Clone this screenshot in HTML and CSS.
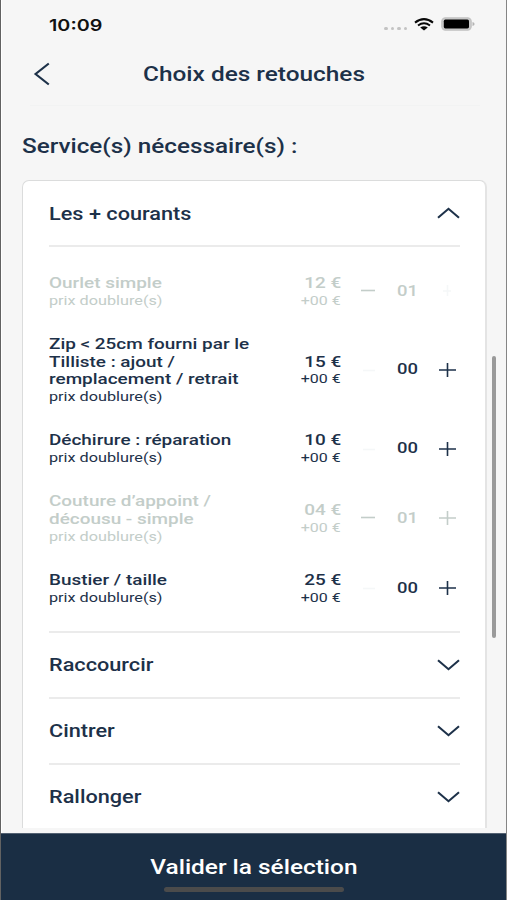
FILE: index.html
```html
<!DOCTYPE html>
<html lang="fr">
<head>
<meta charset="utf-8">
<title>Choix des retouches</title>
<link rel="stylesheet" href="styles.css">
</head>
<body>
<div class="screen">
  <div class="status">
    <span class="wide time">10:09</span>
    <div class="status-icons">
      <span class="dots"><i></i><i></i><i></i><i></i></span>
      <svg class="wifi" width="20" height="13" viewBox="0 0 20 13"><path d="M1 4.6Q10-2.4 19 4.6M4 7.5Q10 3.1 16 7.5" fill="none" stroke="#080808" stroke-width="2"/><path d="M6.2 9.6Q10 6.7 13.8 9.6L10 12.6Z" fill="#080808"/></svg>
      <svg class="battery" width="34" height="14" viewBox="0 0 34 14"><rect x=".8" y=".8" width="29.4" height="12.4" rx="3.6" fill="#c9c9c9" stroke="#c3c3c3" stroke-width="1.2"/><rect x="2.8" y="2.6" width="25.2" height="8.8" rx="1.6" fill="#000"/><path d="M31.5 5Q33.6 5.4 33.6 7T31.5 9Z" fill="#b4b4b4"/></svg>
    </div>
  </div>
  <header class="header">
    <svg class="back" width="18" height="24" viewBox="0 0 18 24"><path d="M15.8 1.5L2.6 12L15.8 22.5" fill="none" stroke="#1d3149" stroke-width="2.2"/></svg>
    <h1 class="wide title">Choix des retouches</h1>
  </header>
  <main class="content">
    <h2 class="wide heading">Service(s) nécessaire(s) :</h2>
    <section class="card">
      <div class="section-head first"><span class="wide">Les + courants</span><svg width="23" height="12" viewBox="0 0 23 12"><path d="M1 10.7L11.5 1.8L22 10.7" /></svg></div>
      <div class="items">
        <div class="item off">
          <div class="name"><b class="wide">Ourlet simple</b><small class="wide">prix doublure(s)</small></div>
          <div class="price"><b class="wide">12 €</b><small class="wide">+00 €</small></div>
          <svg class="minus" width="14" height="16" viewBox="0 0 14 16"><path d="M0 7.5H14"/></svg><span class="wide qty">01</span><svg class="plus faint" width="17" height="16" viewBox="0 0 17 16"><path d="M4 8H12M8.5 2V13"/></svg>
        </div>
        <div class="item">
          <div class="name"><b class="wide">Zip &lt; 25cm fourni par le<br>Tilliste : ajout /<br>remplacement / retrait</b><small class="wide">prix doublure(s)</small></div>
          <div class="price"><b class="wide">15 €</b><small class="wide">+00 €</small></div>
          <svg class="minus faint" width="14" height="16" viewBox="0 0 14 16"><path d="M2 8.5H14"/></svg><span class="wide qty">00</span><svg class="plus" width="17" height="16" viewBox="0 0 17 16"><path d="M0 8H17M8.5 1V15"/></svg>
        </div>
        <div class="item">
          <div class="name"><b class="wide">Déchirure : réparation</b><small class="wide">prix doublure(s)</small></div>
          <div class="price"><b class="wide">10 €</b><small class="wide">+00 €</small></div>
          <svg class="minus faint" width="14" height="16" viewBox="0 0 14 16"><path d="M2 8.5H14"/></svg><span class="wide qty">00</span><svg class="plus" width="17" height="16" viewBox="0 0 17 16"><path d="M0 8H17M8.5 1V15"/></svg>
        </div>
        <div class="item off">
          <div class="name"><b class="wide">Couture d’appoint /<br>décousu - simple</b><small class="wide">prix doublure(s)</small></div>
          <div class="price"><b class="wide">04 €</b><small class="wide">+00 €</small></div>
          <svg class="minus" width="14" height="16" viewBox="0 0 14 16"><path d="M0 7.5H14"/></svg><span class="wide qty">01</span><svg class="plus" width="17" height="16" viewBox="0 0 17 16"><path d="M0 8H17M8.5 1V15"/></svg>
        </div>
        <div class="item">
          <div class="name"><b class="wide">Bustier / taille</b><small class="wide">prix doublure(s)</small></div>
          <div class="price"><b class="wide">25 €</b><small class="wide">+00 €</small></div>
          <svg class="minus faint" width="14" height="16" viewBox="0 0 14 16"><path d="M2 8.5H14"/></svg><span class="wide qty">00</span><svg class="plus" width="17" height="16" viewBox="0 0 17 16"><path d="M0 8H17M8.5 1V15"/></svg>
        </div>
      </div>
      <div class="section-head"><span class="wide">Raccourcir</span><svg width="23" height="12" viewBox="0 0 23 12"><path d="M1 1.3L11.5 10.2L22 1.3"/></svg></div>
      <div class="section-head"><span class="wide">Cintrer</span><svg width="23" height="12" viewBox="0 0 23 12"><path d="M1 1.3L11.5 10.2L22 1.3"/></svg></div>
      <div class="section-head"><span class="wide">Rallonger</span><svg width="23" height="12" viewBox="0 0 23 12"><path d="M1 1.3L11.5 10.2L22 1.3"/></svg></div>
    </section>
  </main>
  <footer class="footer">
    <span class="wide">Valider la sélection</span>
    <div class="home"></div>
  </footer>
  <div class="scrollbar"></div>
</div>
</body>
</html>
```

FILE: styles.css
```css
* { box-sizing: border-box; margin: 0; }

body {
  font-family: Roboto, "Liberation Sans", sans-serif;
  color: #1d3149;
  background: #f6f6f6;
}

.screen {
  position: relative;
  width: 507px;
  height: 900px;
  display: flex;
  flex-direction: column;
  overflow: hidden;
  background: #f6f6f6;
  border-left: 1px solid #626262;
  border-right: 1px solid #858585;
  box-shadow: inset 1px 0 #fff;
}

/* Expanded letterforms used by every label */
.wide {
  display: block;
  width: max-content;
  transform: scaleX(1.22);
  transform-origin: left center;
  font-weight: 500;
  white-space: nowrap;
}

.status {
  height: 49px;
  padding: 0 31px 0 48px;
  display: flex;
  justify-content: space-between;
  align-items: center;
}
.time { font: 600 16.2px/20px Inter, sans-serif; color: #111; }
.status-icons { display: flex; align-items: center; margin-top: -1px; }
.dots { display: flex; gap: 3px; margin: 9px 7px 0 0; }
.dots i { width: 3.5px; height: 3px; border-radius: 2px; background: #c3c3c3; }
.battery { margin-left: 7px; }

.header {
  height: 57px;
  margin: 0 26px 0 29px;
  padding: 0 0 6px 3px;
  display: flex;
  align-items: center;
  border-bottom: 1px solid #f2f3f3;
}
.title { margin-left: 92px; font-size: 20px; line-height: 24px; }

.content {
  height: 722px;
  padding: 0 19px 0 21px;
  overflow: hidden;
}
.heading { padding-top: 29px; font-size: 19.9px; line-height: 24px; }

.card {
  margin-top: 21px;
  height: 700px;
  padding: 0 25px 0 26px;
  background: #fff;
  border: 1px solid #dbdcdc;
  border-right: 2px solid #e4e4e4;
  border-radius: 7px;
}
.section-head {
  height: 66px;
  display: flex;
  align-items: center;
  justify-content: space-between;
  border-top: 2px solid #ebebeb;
  font-size: 17.8px;
}
.section-head .wide { padding-bottom: 1px; }
.section-head.first { height: 64px; border-top: 0; }
.section-head.first .wide { padding: 0; }
.section-head svg path { fill: none; stroke: #1d3149; stroke-width: 2.1; }

.items {
  padding: 28px 0 25px;
  display: flex;
  flex-direction: column;
  gap: 26.7px;
  border-top: 2px solid #ebebeb;
}
.item { display: flex; align-items: center; color: #1d3149; }
.item b { font-size: 15.5px; line-height: 17.7px; }
.item small { font-size: 13.3px; line-height: 16.6px; font-weight: 400; }
.name { width: 222px; }
.price { width: 70px; display: flex; flex-direction: column; align-items: flex-end; }
.price .wide { transform-origin: right center; }
.price small { font-size: 13.1px; }
.item svg path { fill: none; stroke: currentColor; stroke-width: 1.6; }
.item svg { margin-top: -2px; }
.minus { margin-left: 20px; }
.qty { width: 42px; margin: -3px 0 0 21.5px; font-size: 15.1px; line-height: 18px; }
.off { color: #c3cdc9; }
.faint { color: #f5f7f8; }

.footer {
  height: 67px;
  margin: auto -1px 0;
  padding-top: 15px;
  display: flex;
  flex-direction: column;
  align-items: center;
  background: #1a2e44;
  border-top: 1px solid #536172;
  color: #fff;
}
.footer .wide { transform-origin: center; font-size: 20px; line-height: 36px; }
.home { width: 180px; height: 5px; margin: 2px 0 0 1px; border-radius: 3px; background: #4b4b4b; }

.scrollbar {
  position: absolute;
  left: 491px;
  top: 356px;
  width: 4px;
  height: 282px;
  border-radius: 2px;
  background: #9a9a9a;
}
```
